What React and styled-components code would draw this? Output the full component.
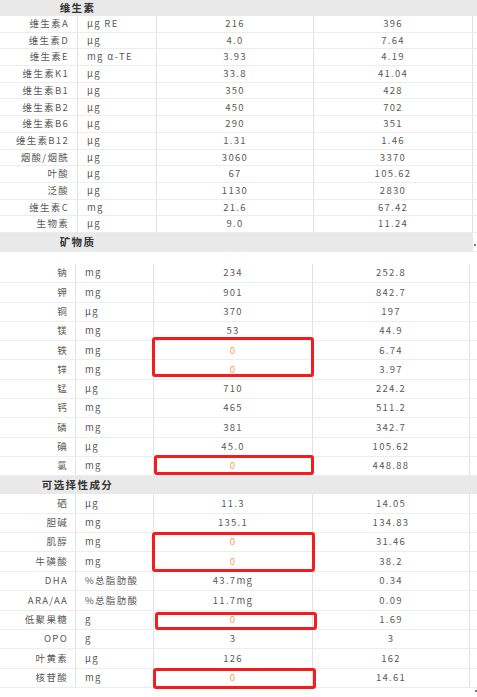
import React from "react";
import styled, { createGlobalStyle } from "styled-components";

const Global = createGlobalStyle`
  html, body { margin: 0; padding: 0; background: #fff; }
  body { font-family: "Noto Sans CJK SC", "Noto Sans", sans-serif; }
`;

const Page = styled.div`
  width: 477px;
  height: 697px;
  overflow: hidden;
  position: relative;
  background: #fff;
`;

const TitleBar = styled.div`
  height: ${(p) => p.$h}px;
  width: ${(p) => p.$w}px;
  background: #e9e9e9;
  display: grid;
  grid-template-columns: 155px 1fr;
  align-items: center;
`;

const TitleText = styled.div`
  text-align: center;
  font-size: 10.5px;
  font-weight: 700;
  color: #333;
  letter-spacing: 1.4px;
  line-height: 1;
`;

const Spacer = styled.div`
  height: ${(p) => p.$h}px;
  border-top: 1px solid #ececec;
  box-sizing: border-box;
`;

const Body = styled.div`
  position: relative;
`;

const Row = styled.div`
  display: grid;
  grid-template-columns: ${(p) => p.$cols};
  height: ${(p) => p.$h}px;
  border-bottom: 1px solid #ededed;
  box-sizing: border-box;
  font-size: 9.5px;
  color: #5a5a5a;
  letter-spacing: 1.3px;
`;

const Cell = styled.div`
  display: flex;
  align-items: center;
  justify-content: ${(p) => p.$align || "center"};
  padding: ${(p) => p.$pad || "0"};
  border-right: ${(p) => (p.$noBorder ? "none" : "1px solid #e2e2e2")};
  box-sizing: border-box;
  white-space: nowrap;
  color: ${(p) => (p.$warn ? "#f2a04c" : "#5a5a5a")};
  line-height: 1;
`;

const Highlight = styled.div`
  position: absolute;
  border: 3px solid #f41c1c;
  border-radius: 3px;
  box-sizing: border-box;
  pointer-events: none;
`;

const Tick = styled.div`
  position: absolute;
  width: 2px;
  height: 2px;
  background: #777;
`;

const vitamins = [
  ["维生素A", "μg RE", "216", "396"],
  ["维生素D", "μg", "4.0", "7.64"],
  ["维生素E", "mg α-TE", "3.93", "4.19"],
  ["维生素K1", "μg", "33.8", "41.04"],
  ["维生素B1", "μg", "350", "428"],
  ["维生素B2", "μg", "450", "702"],
  ["维生素B6", "μg", "290", "351"],
  ["维生素B12", "μg", "1.31", "1.46"],
  ["烟酸/烟酰", "μg", "3060", "3370"],
  ["叶酸", "μg", "67", "105.62"],
  ["泛酸", "μg", "1130", "2830"],
  ["维生素C", "mg", "21.6", "67.42"],
  ["生物素", "μg", "9.0", "11.24"],
];

const minerals = [
  ["钠", "mg", "234", "252.8"],
  ["钾", "mg", "901", "842.7"],
  ["铜", "μg", "370", "197"],
  ["镁", "mg", "53", "44.9"],
  ["铁", "mg", "0", "6.74"],
  ["锌", "mg", "0", "3.97"],
  ["锰", "μg", "710", "224.2"],
  ["钙", "mg", "465", "511.2"],
  ["磷", "mg", "381", "342.7"],
  ["碘", "μg", "45.0", "105.62"],
  ["氯", "mg", "0", "448.88"],
];

const optional = [
  ["硒", "μg", "11.3", "14.05"],
  ["胆碱", "mg", "135.1", "134.83"],
  ["肌醇", "mg", "0", "31.46"],
  ["牛磺酸", "mg", "0", "38.2"],
  ["DHA", "%总脂肪酸", "43.7mg", "0.34"],
  ["ARA/AA", "%总脂肪酸", "11.7mg", "0.09"],
  ["低聚果糖", "g", "0", "1.69"],
  ["OPO", "g", "3", "3"],
  ["叶黄素", "μg", "126", "162"],
  ["核苷酸", "mg", "0", "14.61"],
];

function Table({ rows, cols, h, namePad, unitPad, boxes }) {
  return (
    <Body>
      {rows.map((r) => (
        <Row key={r[0]} $cols={cols} $h={h}>
          <Cell $align="flex-end" $pad={`0 ${namePad}px 0 0`}>{r[0]}</Cell>
          <Cell $align="flex-start" $pad={`0 0 0 ${unitPad}px`}>{r[1]}</Cell>
          <Cell $warn={r[2] === "0"}>{r[2]}</Cell>
          <Cell>{r[3]}</Cell>
          <Cell $noBorder />
        </Row>
      ))}
      {boxes &&
        boxes.map((b, i) => (
          <Highlight
            key={i}
            style={{ left: b.x, top: b.y, width: b.w, height: b.hh }}
          />
        ))}
    </Body>
  );
}

export default function App() {
  return (
    <Page>
      <Global />
      <TitleBar $h={16} $w={477}>
        <TitleText>维生素</TitleText>
      </TitleBar>
      <Table
        rows={vitamins}
        cols="78px 79px 157px 159px 1fr"
        h={16.7}
        namePad={8}
        unitPad={9}
      />
      <TitleBar $h={18} $w={473}>
        <TitleText>矿物质</TitleText>
      </TitleBar>
      <Spacer $h={13} />
      <Table
        rows={minerals}
        cols="76px 78px 159px 157px 1fr"
        h={19.3}
        namePad={7}
        unitPad={9}
        boxes={[
          { x: 152, y: 73, w: 162, hh: 40 },
          { x: 154, y: 191, w: 160, hh: 20 },
        ]}
      />
      <TitleBar $h={18} $w={477}>
        <TitleText>可选择性成分</TitleText>
      </TitleBar>
      <Table
        rows={optional}
        cols="76px 78px 159px 157px 1fr"
        h={19.4}
        namePad={7}
        unitPad={9}
        boxes={[
          { x: 152, y: 38, w: 163, hh: 40 },
          { x: 155, y: 118, w: 162, hh: 18 },
          { x: 153, y: 174, w: 163, hh: 21 },
        ]}
      />
      <Tick style={{ left: 474, top: 244 }} />
      <Tick style={{ left: 475, top: 690 }} />
    </Page>
  );
}
